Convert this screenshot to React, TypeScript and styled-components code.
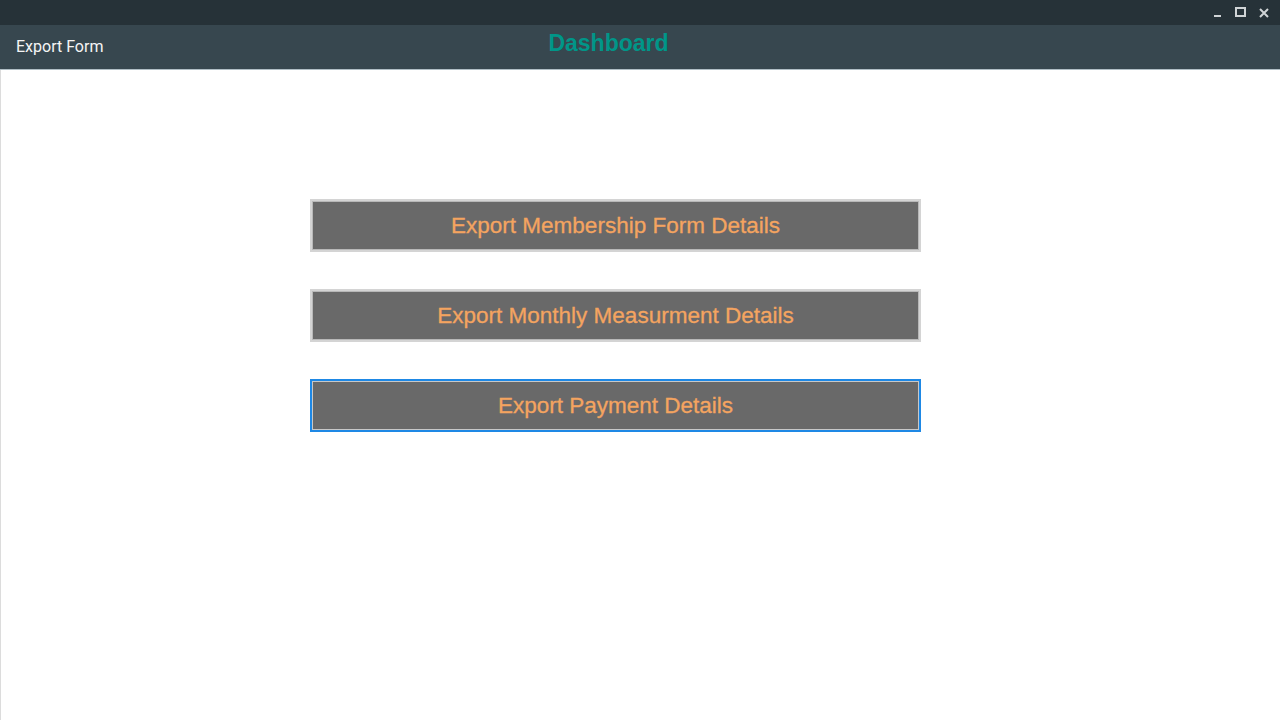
import React from 'react';
import styled, { createGlobalStyle } from 'styled-components';

const GlobalStyle = createGlobalStyle`
  html, body {
    margin: 0;
    padding: 0;
    height: 100%;
    background: #ffffff;
  }
  #root {
    height: 100%;
  }
`;

const Window = styled.div`
  width: 1280px;
  height: 720px;
  display: flex;
  flex-direction: column;
  overflow: hidden;
`;

const TitleBar = styled.div`
  height: 25px;
  background-color: #263238;
  display: flex;
  justify-content: flex-end;
  align-items: center;
  padding-right: 7px;
  gap: 4px;
`;

const ControlButton = styled.div`
  width: 19px;
  height: 25px;
  display: flex;
  align-items: center;
  justify-content: center;
`;

const Header = styled.div`
  height: 44px;
  background-color: #37474f;
  display: grid;
  grid-template-columns: 1fr auto 1fr;
  align-items: center;
  padding: 0 16px;
  border-bottom: 1px solid #b0bec5;
`;

const FormTitle = styled.div`
  font-family: Roboto, 'Liberation Sans', sans-serif;
  font-size: 16px;
  color: #f5f5f5;
  margin-top: -2px;
`;

const DashboardTitle = styled.div`
  font-family: 'Liberation Sans', Arial, sans-serif;
  font-weight: bold;
  font-size: 23px;
  color: #009688;
  margin-left: -63px;
  margin-top: -8px;
`;

const Body = styled.div`
  flex: 1;
  background: #ffffff;
  border-left: 1px solid #dcdcdc;
  display: flex;
  flex-direction: column;
  align-items: flex-start;
  padding-top: 129px;
  padding-left: 309px;
  gap: 37px;
`;

const ExportButton = styled.button<{ $focused?: boolean }>`
  width: 611px;
  height: 53px;
  background-color: #696969;
  border: 2px solid ${p => (p.$focused ? '#1e88e5' : '#d4d4d4')};
  box-shadow: inset 0 0 0 1px ${p => (p.$focused ? '#c8c8c8' : '#b8b8b8')};
  color: #f4a460;
  font-family: 'Liberation Sans', Arial, sans-serif;
  font-size: 22.5px;
  padding: 1px 0 0;
  cursor: pointer;
  outline: none;
  -webkit-text-stroke: 0.3px #f4a460;
`;

const Minimize = () => (
  <svg width="10" height="10" viewBox="0 0 10 10">
    <rect x="1" y="7" width="7" height="2" fill="#d0d4d6" />
  </svg>
);

const Maximize = () => (
  <svg width="11" height="11" viewBox="0 0 11 11">
    <rect x="1" y="1" width="9" height="8" fill="none" stroke="#d0d4d6" strokeWidth="2" />
  </svg>
);

const Close = () => (
  <svg width="10" height="10" viewBox="0 0 10 10">
    <path d="M1 1 L9 9 M9 1 L1 9" stroke="#d0d4d6" strokeWidth="2" />
  </svg>
);

const exportItems = [
  'Export Membership Form Details',
  'Export Monthly Measurment Details',
  'Export Payment Details',
];

const App = () => {
  return (
    <Window>
      <GlobalStyle />
      <TitleBar>
        <ControlButton><Minimize /></ControlButton>
        <ControlButton><Maximize /></ControlButton>
        <ControlButton><Close /></ControlButton>
      </TitleBar>
      <Header>
        <FormTitle>Export Form</FormTitle>
        <DashboardTitle>Dashboard</DashboardTitle>
        <div />
      </Header>
      <Body>
        {exportItems.map((item, index) => (
          <ExportButton key={index} $focused={index === 2}>
            {item}
          </ExportButton>
        ))}
      </Body>
    </Window>
  );
};

export default App;
